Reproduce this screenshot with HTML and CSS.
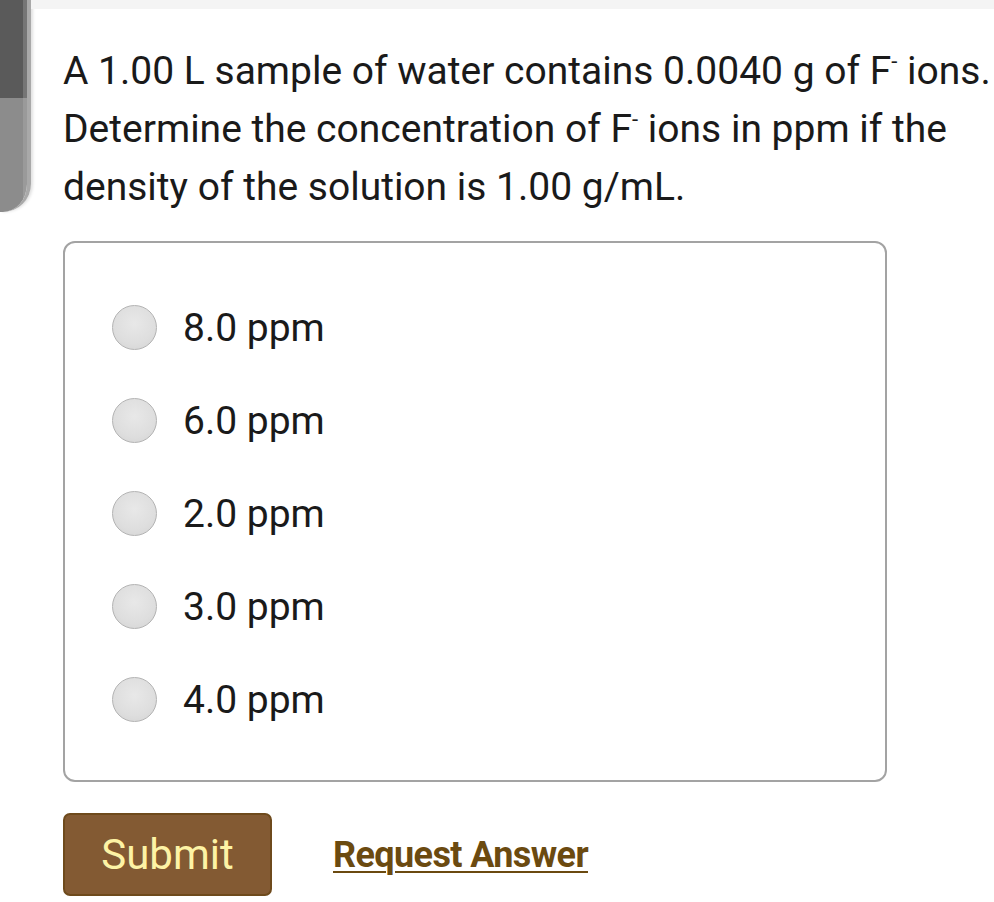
FILE: index.html
```html
<!DOCTYPE html>
<html>
<head>
<meta charset="utf-8">
<link rel="stylesheet" href="styles.css">
</head>
<body>
<div class="page">
  <div class="rail">
    <div class="rail-top"></div>
    <div class="rail-bottom"></div>
  </div>
  <div class="main">
    <div class="topstrip"></div>
    <p class="question">A 1.00 L sample of water contains 0.0040 g of F<sup>-</sup> ions. Determine the concentration of F<sup>-</sup> ions in ppm if the density of the solution is 1.00 g/mL.</p>
    <div class="options">
      <label class="option"><span class="radio"></span><span class="opt-text">8.0 ppm</span></label>
      <label class="option"><span class="radio"></span><span class="opt-text">6.0 ppm</span></label>
      <label class="option"><span class="radio"></span><span class="opt-text">2.0 ppm</span></label>
      <label class="option"><span class="radio"></span><span class="opt-text">3.0 ppm</span></label>
      <label class="option"><span class="radio"></span><span class="opt-text">4.0 ppm</span></label>
    </div>
    <div class="actions">
      <button class="submit">Submit</button>
      <a class="request" href="#">Request Answer</a>
    </div>
  </div>
</div>
</body>
</html>
```

FILE: styles.css
```css
html, body {
  margin: 0;
  padding: 0;
  background: #ffffff;
}
body {
  font-family: Roboto, "Liberation Sans", sans-serif;
  color: #111;
  width: 994px;
  height: 902px;
  overflow: hidden;
}
.page {
  display: flex;
  align-items: flex-start;
}
.rail {
  width: 27px;
  height: 212px;
  flex: none;
  display: flex;
  flex-direction: column;
  border-right: 4px solid #a9a9a9;
  border-bottom-right-radius: 28px;
  overflow: hidden;
  box-shadow: 2px 0 3px rgba(0,0,0,0.12);
}
.rail-top {
  height: 98px;
  background: linear-gradient(to right, #5a5a5a 0, #5a5a5a 23px, #767676 23px);
}
.rail-bottom {
  flex: 1;
  background: linear-gradient(to right, #8c8c8c 0, #8c8c8c 23px, #9a9a9a 23px);
}
.main {
  flex: 1;
  display: flex;
  flex-direction: column;
  padding-left: 32px;
  min-width: 0;
}
.topstrip {
  height: 9px;
  margin-left: -32px;
  background: #f4f4f4;
}
.question {
  margin: 33px -10px 0 0;
  font-size: 39px;
  line-height: 58px;
  color: #1a1a1a;
}
.question sup {
  font-size: 22px;
  line-height: 0;
  vertical-align: 15px;
}
.options {
  margin-top: 25px;
  width: 824px;
  height: 541px;
  box-sizing: border-box;
  border: 2px solid #a3a3a3;
  border-radius: 12px;
  display: flex;
  flex-direction: column;
  gap: 48px;
  padding: 62px 0 0 47px;
}
.option {
  display: flex;
  align-items: center;
  gap: 26px;
  height: 45px;
}
.radio {
  width: 45px;
  height: 45px;
  border-radius: 50%;
  border: 1.5px solid #b3b3b3;
  background: radial-gradient(circle at 50% 40%, #e8e8e8 0%, #dedede 60%, #d2d2d2 100%);
  box-sizing: border-box;
  flex: none;
}
.opt-text {
  font-size: 39px;
  color: #1a1a1a;
}
.actions {
  margin-top: 31px;
  display: flex;
  align-items: center;
  gap: 61px;
}
.submit {
  width: 209px;
  height: 83px;
  background: #835a33;
  border: 2px solid #6e4a1c;
  border-radius: 7px;
  color: #fdf3a5;
  font-family: Roboto, "Liberation Sans", sans-serif;
  font-size: 42px;
  padding: 0;
}
.request {
  font-size: 36px;
  font-weight: 700;
  color: #6b4a10;
  text-decoration: underline;
  text-decoration-thickness: 2px;
  text-underline-offset: 4px;
  letter-spacing: -0.6px;
}
```
